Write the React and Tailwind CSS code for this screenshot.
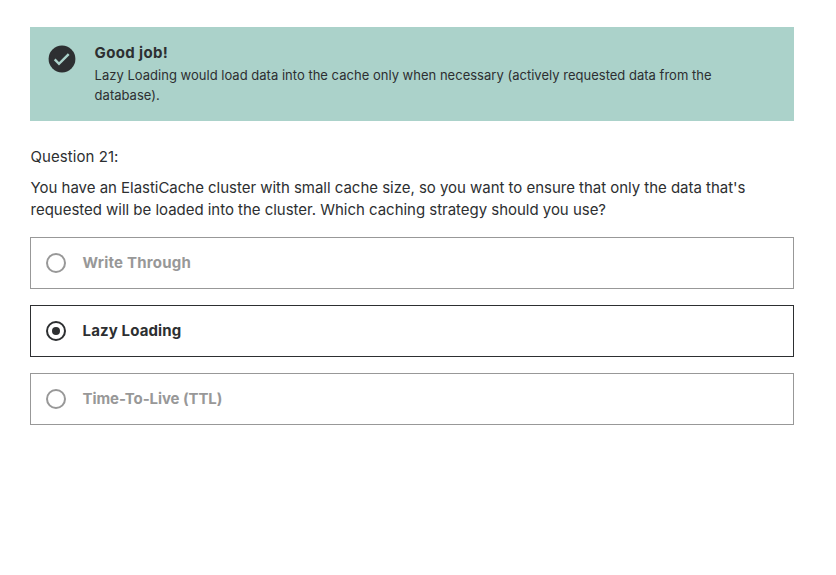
const options = [
  { label: "Write Through", selected: false, tracking: "tracking-[0.21px]" },
  { label: "Lazy Loading", selected: true, tracking: "tracking-[0.13px]" },
  { label: "Time-To-Live (TTL)", selected: false, tracking: "tracking-[-0.08px]" },
];

function Option({ label, selected, tracking }) {
  return (
    <label
      className={`flex h-[52px] items-center border pl-[15px] ${
        selected ? "border-[#2d2f31] text-[#2d2f31]" : "border-[#989898] text-[#989898]"
      }`}
    >
      <svg className="h-5 w-5 shrink-0" viewBox="0 0 20 20" fill="none">
        <circle cx="10" cy="10" r="9" stroke="currentColor" strokeWidth="2" />
        {selected && <circle cx="10" cy="10" r="4" fill="currentColor" />}
      </svg>
      <span className={`ml-[16.6px] text-[15px] leading-[22px] font-bold whitespace-nowrap ${tracking}`}>{label}</span>
    </label>
  );
}

export default function App() {
  return (
    <main className="min-h-[575px] bg-white pt-[27px] pr-[42px] pl-[30px] font-['Inter','Liberation_Sans',sans-serif] text-[#2d2f31]">
      <section className="flex h-[94px] bg-[#abd2ca] pt-[15px] pl-[18px]">
        <svg className="mt-[3px] h-7 w-7 shrink-0" viewBox="0 0 28 28">
          <circle cx="14" cy="14" r="13.4" fill="#2d2f31" />
          <path d="M6.7 14.4l4.3 4.4 9.7-9.7" fill="none" stroke="#abd2ca" strokeWidth="2.4" />
        </svg>
        <div className="ml-[18.6px]">
          <h2 className="text-[15px] leading-[22px] font-bold tracking-[0.36px]">Good job!</h2>
          <p className="mt-px text-[13px] leading-5 tracking-[0.013px] whitespace-nowrap">
            Lazy Loading would load data into the cache only when necessary (actively requested data from the
            <br />
            database).
          </p>
        </div>
      </section>
      <h3 className="mt-[25px] pl-[0.6px] text-[15px] leading-[22px] tracking-[0.06px]">Question 21:</h3>
      <p className="mt-[9px] pl-[0.6px] text-[15px] leading-[22px] tracking-[-0.027px] whitespace-nowrap">
        You have an ElastiCache cluster with small cache size, so you want to ensure that only the data that's
        <br />
        requested will be loaded into the cluster. Which caching strategy should you use?
      </p>
      <div className="mt-4 flex flex-col gap-4">
        {options.map((option) => (
          <Option key={option.label} {...option} />
        ))}
      </div>
    </main>
  );
}
